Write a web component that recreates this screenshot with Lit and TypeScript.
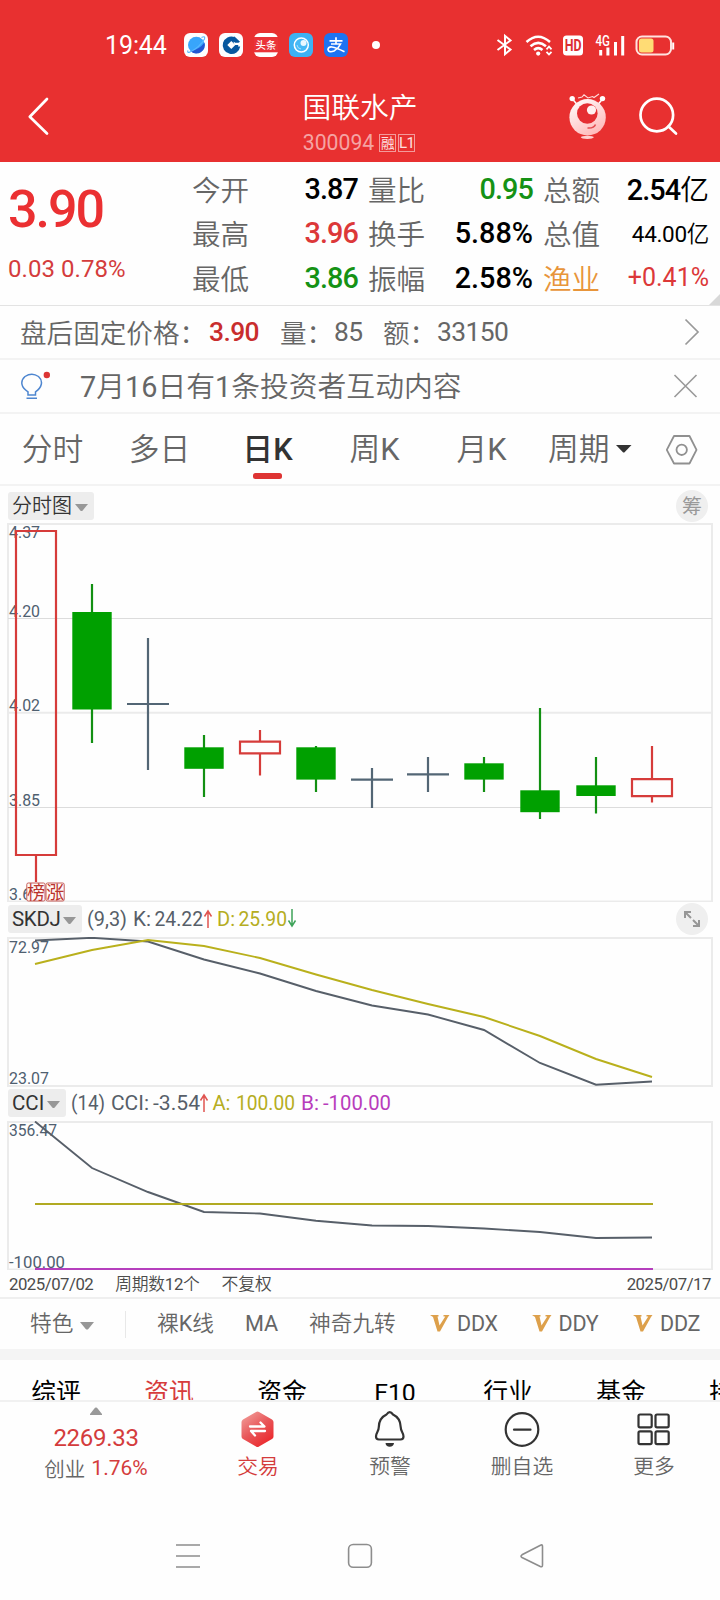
import { LitElement, html, svg, css } from "lit";
import { customElement } from "lit/decorators.js";
import { classMap } from "lit/directives/class-map.js";

type Candle = { kind: "up" | "down" | "flat"; open: number; close: number; high: number; low: number };

const STEP = 56;
const FIRST = 36;
const colX = (i: number) => FIRST + STEP * i;

// Vertical values are offsets inside the 380px price pane.
const CANDLES: Candle[] = [
  { kind: "up", open: 9, close: 333, high: 9, low: 360 },
  { kind: "down", open: 90, close: 187.5, high: 62, low: 221 },
  { kind: "flat", open: 182, close: 182, high: 116, low: 248 },
  { kind: "down", open: 225.3, close: 246.8, high: 213, low: 275 },
  { kind: "up", open: 219.7, close: 231.3, high: 208, low: 253.5 },
  { kind: "down", open: 225.3, close: 257.6, high: 224, low: 270 },
  { kind: "flat", open: 257.6, close: 257.6, high: 246, low: 286 },
  { kind: "flat", open: 252.3, close: 252.3, high: 235, low: 270 },
  { kind: "down", open: 241.3, close: 257.6, high: 235, low: 270 },
  { kind: "down", open: 268.3, close: 290.2, high: 186, low: 297 },
  { kind: "down", open: 263.3, close: 274, high: 235, low: 291.5 },
  { kind: "up", open: 257.2, close: 274.2, high: 224, low: 280.5 },
];

const SKDJ_K = [4.5, 1.8, 5.5, 23.5, 37.5, 55, 69.5, 78.5, 94, 127, 148.7, 145.5];
const SKDJ_D = [28, 14, 4, 10, 22, 38.5, 54, 68, 81, 100, 123, 141];
const CCI = [0.5, 47, 71, 91, 92.5, 99.7, 104.5, 105, 107.5, 111, 117, 116.5];

const toPoints = (ys: number[]) => ys.map((y, i) => `${i ? colX(i) : 35},${y}`).join(" ");

const chev = svg`<path d="M0 0H13L7.7 6.4Q6.5 7.6 5.3 6.4Z" fill="#979797"/>`;

// Latin runs are wrapped so that they can take a heavier weight than the Chinese around them.
const mixed = (s: string) =>
  s.split(/([A-Z0-9]+)/).filter(Boolean).map((p) => (/^[A-Z0-9]/.test(p) ? html`<span class="lat">${p}</span>` : p));

@customElement("status-bar")
class StatusBar extends LitElement {
  static styles = css`
    :host { display: block; }
    .bar { height: 81px; padding-top: 9px; box-sizing: border-box; display: flex; align-items: center; color: #fff; }
    .time { width: 79px; padding-left: 105px; font: 400 25px/1 Roboto, "Noto Sans", sans-serif; letter-spacing: -0.1px; }
    .apps { display: flex; gap: 11px; }
    .dot { width: 8px; height: 8px; border-radius: 4px; background: #fff; margin-left: 24px; }
    .sys { display: block; margin-left: 115px; }
    text { font-family: "Noto Sans CJK SC", sans-serif; }
    .hd { font-family: Roboto, sans-serif; font-weight: 700; }
    .g { font-family: Roboto, sans-serif; font-weight: 500; }
  `;
  render() {
    return html`<div class="bar">
      <div class="time">19:44</div>
      <div class="apps">
        <svg width="24" height="24" viewBox="0 0 24 24">
          <rect width="24" height="24" rx="6" fill="#fdfdff"/>
          <circle cx="12.300" cy="12" r="8.300" fill="#38a5fb"/>
          <path d="M20.500 9.500A8.400 8.400 0 0 1 6.500 18Q15.500 16.500 20.500 9.500Z" fill="#2257d3"/>
          <path d="M17.500 4.500Q21.500 2.500 20.500 6Q16 14 6 19Q3 20.500 4 17.500" fill="none" stroke="#59b8ff" stroke-width="1.200"/>
        </svg>
        <svg width="24" height="24" viewBox="0 0 24 24">
          <rect width="24" height="24" rx="6" fill="#fdfdff"/>
          <path d="M15.500 4A8.800 8.800 0 1 0 21.200 13.500H17.500A5.500 5.500 0 0 1 12.300 17.300 5.300 5.300 0 0 1 7 12 5.300 5.300 0 0 1 12.300 6.700Q14.500 6.800 16 8.200Z" fill="#07579f"/>
          <circle cx="12.300" cy="12" r="7" fill="#07579f"/>
          <path d="M12.300 8 16.300 12 12.300 16 8.300 12Z" fill="#fff"/>
          <path d="M15.500 12H22V9.500L20.500 8.800H14.500Z" fill="#fff"/>
          <path d="M15.500 3.500 21 8.800 19.500 9.800H16L12.500 5.500" fill="#07579f"/>
        </svg>
        <svg width="24" height="24" viewBox="0 0 24 24">
          <rect width="24" height="24" rx="6" fill="#fff"/>
          <rect y="4" width="24" height="15.300" fill="#ea3338"/>
          <text x="12" y="15.700" font-size="10.400" font-weight="500" text-anchor="middle" fill="#fff">头条</text>
        </svg>
        <svg width="24" height="24" viewBox="0 0 24 24">
          <rect width="24" height="24" rx="6" fill="#3db2f3"/>
          <circle cx="12.300" cy="12" r="7" fill="#45b9f6" stroke="#fff" stroke-width="1.500"/>
          <path d="M8 12A4.500 4.500 0 0 0 12 16" stroke="#a7e2ff" stroke-width="1" fill="none"/>
          <circle cx="14.500" cy="10" r="3" fill="#e9f8ff"/>
        </svg>
        <svg width="24" height="24" viewBox="0 0 24 24">
          <rect width="24" height="24" rx="6" fill="#1d73f2"/>
          <path d="M5.500 7.800H18.500M12 4.200V11M7 11H16.500Q14.500 15.500 10 18Q5 20 4 16.800Q4 13.500 8 14Q12 14.500 20.500 18.800" fill="none" stroke="#fff" stroke-width="1.700"/>
        </svg>
      </div>
      <div class="dot"></div>
      <svg class="sys" width="180" height="24" viewBox="0 0 180 24" fill="none" stroke="#fff">
        <path d="M2.500 7 15.500 16.500 10 21.200V2.800L15.500 7.500 2.500 17" stroke-width="2"/>
        <path d="M31.500 9Q43 -1.500 55 9M35.500 13.200Q43.200 6.500 51 13.200M39 17Q43.200 13.200 47.500 17" stroke-width="2.500"/>
        <circle cx="43.200" cy="20.600" r="2.100" fill="#fff" stroke="none"/>
        <path d="M51.500 16.300 54 13.500 56.500 16.300M51.500 18.800 54 21.500 56.500 18.800" stroke-width="1.800"/>
        <rect x="68" y="2.500" width="20" height="20" rx="3.500" fill="#fff" stroke="none"/>
        <text class="hd" x="69.700" y="18.300" font-size="16" textLength="16.800" lengthAdjust="spacingAndGlyphs" fill="#dc2d32" stroke="none">HD</text>
        <text class="g" x="100.500" y="12.800" font-size="14" textLength="14.500" lengthAdjust="spacingAndGlyphs" fill="#fff" stroke="none">4G</text>
        <path d="M105.700 17V22.500M112.900 14.500V22.500M120.500 9V22.500M127.700 3V22.500" stroke-width="3"/>
        <rect x="141.500" y="3.500" width="34.500" height="18" rx="5.500" stroke="#ffe3e0" stroke-width="2"/>
        <rect x="144" y="5.600" width="14.500" height="14" rx="2.500" fill="#ffdc75" stroke="none"/>
        <path d="M178.200 9.500V16.500" stroke-width="2"/>
      </svg>
    </div>`;
  }
}

@customElement("stock-header")
class StockHeader extends LitElement {
  static styles = css`
    :host { display: block; }
    .row { height: 81px; display: grid; grid-template-columns: 240px 240px 240px; color: #fff; }
    .back { display: block; margin: 15px 0 0 27px; }
    .mid { display: flex; flex-direction: column; align-items: center; }
    .name { font: 350 28.800px/36px "Noto Sans CJK SC", sans-serif; margin-top: 7px; height: 43px; }
    .code { display: flex; align-items: center; height: 24px; font: 400 21.200px/24px Roboto, sans-serif; color: #f5a3a3; margin-left: -2px; }
    .tags { display: flex; gap: 2px; margin-left: 5px; }
    .tag { box-sizing: border-box; width: 17px; height: 18px; border: 1px solid #f39b9b; text-align: center; color: #fde0e0; font: 400 13.500px/15px "Noto Sans CJK SC", sans-serif; display: flex; justify-content: center; }
    .latin { font: 400 15px/16px Roboto, sans-serif; letter-spacing: -0.500px; }
    .right { display: flex; }
    .bot { display: block; margin: 12px 0 0 87px; }
    .find { display: block; margin: 14px 0 0 29px; }
  `;
  render() {
    return html`<div class="row">
      <svg class="back" width="24" height="41" fill="none" stroke="#fff" stroke-width="2.700" stroke-linecap="round" stroke-linejoin="round"><path d="M20 3 2.800 20.700 20 37.500"/></svg>
      <div class="mid">
        <div class="name">国联水产</div>
        <div class="code">300094<span class="tags"><span class="tag">融</span><span class="tag latin">L1</span></span></div>
      </div>
      <div class="right">
        <svg class="bot" width="42" height="48" viewBox="0 0 42 48">
          <defs><linearGradient id="body" x1="0" y1="0" x2=".6" y2="1"><stop offset="0" stop-color="#fff"/><stop offset="1" stop-color="#ffbcbc"/></linearGradient></defs>
          <path d="M5.500 6 10 11.500M35.500 6 31 11.500" stroke="#fff" stroke-width="1.500"/>
          <circle cx="5.200" cy="5.600" r="2.700" fill="#fff"/><circle cx="35.500" cy="5.600" r="2.700" fill="#fff"/>
          <path d="M11 5 15 4 17 1.800 21 5 25.500 3.500 27 4.500 32 1" fill="none" stroke="#ffdcdc" stroke-width="1.100"/>
          <circle cx="20.600" cy="24.300" r="18.200" fill="url(#body)"/>
          <circle cx="20.300" cy="20.500" r="10.300" fill="#e52d32"/>
          <circle cx="24.500" cy="17" r="4.600" fill="#fff0f0"/>
          <path d="M20.500 35Q27 35.500 28.500 31.500" stroke="#e34b50" stroke-width="1.500" fill="none"/>
          <ellipse cx="20.300" cy="44.300" rx="6.500" ry="1.600" fill="#ffd0d0"/>
        </svg>
        <svg class="find" width="42" height="42" fill="none" stroke="#fff" stroke-width="2.700" stroke-linecap="round"><circle cx="18.800" cy="20" r="16.300"/><path d="M30.500 31.500 38 38.500"/></svg>
      </div>
    </div>`;
  }
}

@customElement("quote-panel")
class QuotePanel extends LitElement {
  static styles = css`
    :host { display: block; }
    .panel { height: 143px; display: grid; grid-template-columns: 192px 166px 10px 165px 10px 166px 11px; border-bottom: 1px solid #e3e3e3; font-family: Roboto, "Noto Sans CJK SC", sans-serif; }
    .price { padding-left: 8px; color: #eb3032; }
    .last { height: 64px; padding-top: 16px; font: 500 52px/64px Roboto, sans-serif; letter-spacing: -2px; }
    .delta { padding-top: 13px; font: 400 24px/28px Roboto, sans-serif; letter-spacing: 0.050px; color: #d43c3c; }
    .col { padding-top: 5px; }
    .cell { display: flex; justify-content: space-between; align-items: center; height: 44.300px; }
    .label { font: 350 28.600px/40px "Noto Sans CJK SC", sans-serif; color: #666; }
    .value { font-size: 28.800px; line-height: 40px; font-weight: 500; letter-spacing: 0; color: #000; }
    .cn { font-weight: 350; font-family: "Noto Sans CJK SC", sans-serif; }
    .mid { font-size: 22.500px; font-weight: 400; letter-spacing: -0.300px; }
    .pct { font-size: 25px; font-weight: 400; letter-spacing: 0; }
    .red { color: #dc3839; } .green { color: #159215; } .orange { color: #e8953a; }
    .corner { align-self: end; width: 0; border-left: 11px solid transparent; border-bottom: 11px solid #d8d8d8; }
    .tight { letter-spacing: -0.900px; }
    .tight .cn { letter-spacing: 0; }
  `;
  cell(label: string, value: unknown, cls = "", lcls = "") {
    return html`<div class="cell"><span class="label ${lcls}">${label}</span><span class="value ${cls}">${value}</span></div>`;
  }
  render() {
    return html`<div class="panel">
      <div class="price"><div class="last">3.90</div><div class="delta">0.03 0.78%</div></div>
      <div class="col">${this.cell("今开", "3.87", "tight")}${this.cell("最高", "3.96", "red tight")}${this.cell("最低", "3.86", "green tight")}</div>
      <i></i>
      <div class="col">${this.cell("量比", "0.95", "green tight")}${this.cell("换手", "5.88%")}${this.cell("振幅", "2.58%")}</div>
      <i></i>
      <div class="col">${this.cell("总额", html`2.54<span class="cn">亿</span>`, "tight")}${this.cell("总值", html`44.00<span class="cn">亿</span>`, "mid")}${this.cell("渔业", "+0.41%", "pct red", "orange")}</div>
      <div class="corner"></div>
    </div>`;
  }
}

@customElement("notice-rows")
class NoticeRows extends LitElement {
  static styles = css`
    :host { display: block; }
    .row { display: flex; align-items: center; box-sizing: border-box; border-bottom: 2px solid #f3f3f3; color: #666; font-family: Roboto, "Noto Sans CJK SC", sans-serif; }
    .fixed { height: 54px; padding-left: 20px; font-size: 26.400px; }
    .tip { height: 54px; padding-left: 20px; }
    .cn { font: 350 26.600px/40px "Noto Sans CJK SC", sans-serif; }
    .num { line-height: 40px; letter-spacing: -0.600px; }
    .price { color: #c92d2d; font-weight: 500; }
    .a { width: 189px; } .b { width: 71px; } .c { width: 54px; } .d { width: 49px; } .e { width: 54px; }
    .more { margin-left: auto; margin-right: 19px; }
    .text { font: 350 28.800px/40px Roboto, "Noto Sans CJK SC", sans-serif; width: 593px; padding-left: 28px; padding-top: 2px; }
    .lat { font-weight: 400; }
  `;
  render() {
    return html`<div class="row fixed">
        <span class="cn a">盘后固定价格：</span><span class="num b price">3.90</span>
        <span class="cn c">量：</span><span class="num d">85</span>
        <span class="cn e">额：</span><span class="num">33150</span>
        <svg class="more" width="18" height="30" fill="none" stroke="#999" stroke-width="1.700"><path d="M2.500 2.500 15 15 2.500 27.500"/></svg>
      </div>
      <div class="row tip">
        <svg width="32" height="30" fill="none" stroke="#4e86d0" stroke-width="1.500"><path d="M8 24V20.800C.8 16.500 0 10 5 5.500Q12 .8 18.500 5.500C23.500 10 22 16.500 15.500 20.800V24ZM6.500 27.300H17"/><circle cx="26.800" cy="4" r="3.200" fill="#dc3535" stroke="none"/></svg>
        <span class="text">${mixed("7月16日有1条投资者互动内容")}</span>
        <svg width="26" height="26" fill="none" stroke="#999" stroke-width="1.600"><path d="M1.500 2 23.500 24M23.500 2 1.500 24"/></svg>
      </div>`;
  }
}

@customElement("period-tabs")
class PeriodTabs extends LitElement {
  static styles = css`
    :host { display: block; }
    .tabs { height: 72px; box-sizing: border-box; border-bottom: 2px solid #f3f3f3; display: grid; grid-template-columns: 105px 109px 107px 107px 107px 125px 60px; }
    .tab { display: flex; flex-direction: column; align-items: center; color: #666; font: 350 30.800px/40px Roboto, "Noto Sans CJK SC", sans-serif; padding-top: 16px; }
    .on { color: #333; font-weight: 500; }
    .lat { font-weight: 400; }
    .on .lat { font-weight: 500; }
    .bar { width: 29px; height: 6px; border-radius: 2.500px; background: #de3433; margin-top: 3px; }
    .cycle { flex-direction: row; align-items: flex-start; padding-left: 13px; }
    .caret { margin: 15px 0 0 6px; }
    .gear { margin: 20px 0 0 5px; }
  `;
  render() {
    const tab = (t: string, on = false) => html`<div class=${classMap({ tab: true, on })}><div>${mixed(t)}</div>${on ? html`<div class="bar"></div>` : ""}</div>`;
    return html`<div class="tabs">
      ${tab("分时")}${tab("多日")}${tab("日K", true)}${tab("周K")}${tab("月K")}
      <div class="tab cycle">周期<svg class="caret" width="16" height="9"><path d="M0 0H15.500L8.800 7Q7.700 8 6.700 7Z" fill="#333"/></svg></div>
      <svg class="gear" width="34" height="32" fill="none" stroke="#909090" stroke-width="1.800"><path d="M9 2H24.500L31.500 15.800 24.500 29.500H9L1.800 15.800Z" stroke-linejoin="round"/><circle cx="16.700" cy="15.800" r="5.200"/></svg>
    </div>`;
  }
}

@customElement("chart-area")
class ChartArea extends LitElement {
  static styles = css`
    :host { display: block; }
    .head { display: flex; align-items: center; padding: 0 12px 0 8px; box-sizing: border-box; }
    .h1 { height: 36px; padding-top: 4px; }
    .h2 { height: 35px; padding-bottom: 1px; }
    .h3 { height: 34px; padding-bottom: 2px; }
    .chip { display: flex; align-items: center; gap: 3px; height: 28px; padding: 0 6px 0 4px; background: #ededed; border-radius: 3px; color: #333; font: 350 20px/26px Roboto, "Noto Sans CJK SC", sans-serif; box-sizing: border-box; }
    .w1 { width: 86px; } .w2 { width: 74px; font-weight: 400; font-size: 20.500px; letter-spacing: -0.300px; gap: 2px; } .w3 { width: 58px; font-weight: 400; font-size: 20.500px; }
    .chip svg { margin-top: 4px; flex: none; }
    .grow { flex: 1; }
    .round { width: 32px; height: 32px; border-radius: 16px; background: #efefef; display: flex; align-items: center; justify-content: center; color: #999; font: 400 20px/30px "Noto Sans CJK SC", sans-serif; flex: none; }
    .legend { display: block; margin-left: 5px; }
    .pane { display: block; }
    .l { font: 400 20.500px Roboto, sans-serif; fill: #575f69; }
    .y { fill: #b5ad22; } .m { fill: #b83cbc; }
    .ax { font: 400 16.500px Roboto, sans-serif; fill: #4f6070; }
    .frame { fill: none; stroke: #ebebeb; stroke-width: 2; }
    .grid { stroke: #dcdcdc; stroke-width: 1; }
    .badge { font: 400 18px "Noto Sans CJK SC", sans-serif; fill: #b9332c; }
    .dates { height: 29px; box-sizing: border-box; padding: 0 9px; display: flex; align-items: center; border-bottom: 2px solid #efefef; color: #4c4c4c; font: 400 16.800px/24px Roboto, "Noto Sans CJK SC", sans-serif; letter-spacing: -0.500px; }
    .cnt { margin-left: 22px; letter-spacing: -0.300px; } .adj { margin-left: 22px; flex: 1; letter-spacing: 0; }
    .dates .cn { font-weight: 350; }
    .lat { font-weight: 400; }
  `;
  t(x: number, w: number, s: string, y: number, cls: string) {
    return svg`<text class=${cls} x=${x} y=${y} textLength=${w} lengthAdjust="spacingAndGlyphs">${s}</text>`;
  }
  candle(c: Candle, i: number) {
    const x = colX(i);
    if (c.kind === "flat")
      return svg`<path d="M${x} ${c.high}V${c.low}M${x - 21} ${c.open}H${x + 21}" stroke="#536675" stroke-width="2.200" fill="none"/>`;
    if (c.kind === "down")
      return svg`<path d="M${x} ${c.high}V${c.low}" stroke="#129012" stroke-width="2.200"/><rect x=${x - 19.7} y=${c.open} width="39.400" height=${c.close - c.open} fill="#00a000"/>`;
    return svg`<path d="M${x} ${c.high}V${c.open}M${x} ${c.close}V${c.low}M${x - 20} ${c.open}H${x + 20}V${c.close}H${x - 20}Z" stroke="#d63c3a" stroke-width="2.200" fill="none"/>`;
  }
  arrow(x: number, up: boolean) {
    return svg`<path d=${up ? `M${x} 24V7M${x - 3.5} 12.5 ${x} 7 ${x + 3.5} 12.5` : `M${x} 5V22M${x - 3.5} 16.5 ${x} 22 ${x + 3.5} 16.5`} fill="none" stroke=${up ? "#e05450" : "#3fa35a"} stroke-width="1.500"/>`;
  }
  render() {
    const caret = html`<svg width="13" height="8">${chev}</svg>`;
    const a = this.t.bind(this);
    return html`
      <div class="head h1"><div class="chip w1">分时图${caret}</div><div class="grow"></div><div class="round">筹</div></div>
      <svg class="pane" width="720" height="380" viewBox="0 0 720 380">
        <path class="frame" d="M8 2H712V379.500H8ZM8 190.700H712"/>
        <path class="grid" d="M8 96.500H712M8 285.500H712"/>
        ${a(9, 31, "4.37", 16, "ax")}${a(9, 31, "4.20", 95, "ax")}${a(9, 31, "4.02", 189, "ax")}${a(9, 31, "3.85", 283.5, "ax")}${a(9, 31, "3.67", 378, "ax")}
        ${CANDLES.map((c, i) => this.candle(c, i))}
        <rect x="26.800" y="361" width="18.200" height="18" rx="1.500" fill="#fff8f7" stroke="#c65d58" stroke-width="1"/>
        <rect x="46" y="361" width="18.200" height="18" rx="1.500" fill="#fff8f7" stroke="#c65d58" stroke-width="1"/>
        <text class="badge" x="27" y="376.500">榜</text><text class="badge" x="46.200" y="376.500">涨</text>
      </svg>
      <div class="head h2"><div class="chip w2">SKDJ${caret}</div>
        <svg class="legend" width="400" height="30">
          ${a(0, 40, "(9,3)", 22, "l")}${a(46, 18, "K:", 22, "l")}${a(67.5, 48.5, "24.22", 22, "l")}${this.arrow(121, true)}
          ${a(130, 18, "D:", 22, "l y")}${a(151.5, 48.5, "25.90", 22, "l y")}${this.arrow(205, false)}
        </svg>
        <div class="grow"></div>
        <div class="round"><svg width="18" height="18" fill="none" stroke="#979797" stroke-width="2"><path d="M2 8V2H8M2 2 8 8M10 10 16 16M16 10V16H10"/></svg></div>
      </div>
      <svg class="pane" width="720" height="150" viewBox="0 1 720 150">
        <path class="frame" d="M8 2H712V150H8Z"/>
        ${a(9, 40, "72.97", 16.5, "ax")}${a(9, 40, "23.07", 147.5, "ax")}
        <polyline points=${toPoints(SKDJ_K)} fill="none" stroke="#575f69" stroke-width="1.900"/>
        <polyline points=${toPoints(SKDJ_D)} fill="none" stroke="#b9b01c" stroke-width="1.900"/>
      </svg>
      <div class="head h3"><div class="chip w3">CCI${caret}</div>
        <svg class="legend" width="400" height="30">
          ${a(0, 34, "(14)", 22, "l")}${a(40, 38, "CCI:", 22, "l")}${a(82, 47, "-3.54", 22, "l")}${this.arrow(133, true)}
          ${a(141.5, 18, "A:", 22, "l y")}${a(165, 59, "100.00", 22, "l y")}
          ${a(230, 18, "B:", 22, "l m")}${a(252, 68, "-100.00", 22, "l m")}
        </svg>
      </div>
      <svg class="pane" width="720" height="149" viewBox="0 0 720 149">
        <path class="frame" d="M8 1H712V148.500H8Z"/>
        ${a(9, 48, "356.47", 15, "ax")}${a(9, 56, "-100.00", 147, "ax")}
        <polyline points=${toPoints(CCI)} fill="none" stroke="#575f69" stroke-width="1.900"/>
        <path d="M35 83H653" stroke="#b1aa22" stroke-width="2"/><path d="M35 148H653" stroke="#b53fbd" stroke-width="2"/>
      </svg>
      <div class="dates"><span>2025/07/02</span><span class="cnt cn">${mixed("周期数12个")}</span><span class="adj cn">不复权</span><span>2025/07/17</span></div>`;
  }
}

@customElement("tool-rows")
class ToolRows extends LitElement {
  static styles = css`
    :host { display: block; }
    .tools { height: 50px; border-bottom: 11px solid #f4f4f4; display: flex; align-items: center; color: #666; font: 350 21.700px/30px Roboto, "Noto Sans CJK SC", sans-serif; white-space: nowrap; overflow: hidden; }
    .tools > span { flex: none; }
    .lat { font-weight: 400; }
    .feat { width: 95px; padding-left: 30px; display: flex; align-items: center; gap: 7px; }
    .feat svg { margin-top: 5px; }
    .sep { width: 1px; height: 27px; background: #e8e8e8; margin-right: 31px; }
    .k { width: 88px; } .ma { width: 64px; } .nine { width: 121px; }
    .dd { width: 101.500px; display: flex; align-items: center; gap: 7px; }
    .dd .lat { font-size: 21.500px; letter-spacing: -0.200px; }
    .news { height: 42px; overflow: hidden; border-bottom: 2px solid #f1f1f1; display: grid; grid-template-columns: repeat(7, 113px); padding-left: 31px; color: #000; font: 400 24.800px/30px Roboto, "Noto Sans CJK SC", sans-serif; box-sizing: border-box; }
    .item { padding-top: 18px; width: 50px; text-align: center; white-space: nowrap; }
    .cur { color: #d63c3c; }
  `;
  render() {
    const dd = (s: string) => html`<span class="dd"><svg width="20" height="18"><path d="M0 0H8.500V1.500H7.500L9.500 10.500 15.300 1.500H13.500V0H19.500L18 2 10 16.500H7.500L3 2Z" fill="#dda04b"/></svg><span class="lat">${s}</span></span>`;
    return html`<div class="tools">
        <span class="feat">特色<svg width="14" height="9"><g transform="scale(1.080)">${chev}</g></svg></span><span class="sep"></span>
        <span class="k">${mixed("裸K线")}</span><span class="ma lat">MA</span><span class="nine">神奇九转</span>${["DDX", "DDY", "DDZ"].map(dd)}
      </div>
      <div class="news">${["综评", "资讯", "资金", "F10", "行业", "基金", "持仓"].map((s, i) => html`<span class="item ${i === 1 ? "cur" : ""}">${s}</span>`)}</div>`;
  }
}

@customElement("bottom-bar")
class BottomBar extends LitElement {
  static styles = css`
    :host { display: block; }
    .bar { height: 100px; display: grid; grid-template-columns: 192px repeat(4, 132px); }
    .index { display: flex; flex-direction: column; align-items: center; color: #d43c3c; }
    .up { margin-top: 5px; }
    .pts { font: 400 24px/26px Roboto, sans-serif; margin-top: 10px; letter-spacing: -0.300px; }
    .chg { display: flex; align-items: center; gap: 6px; margin-top: 1px; font: 400 21px/32px Roboto, sans-serif; }
    .cn { color: #666; font: 350 20.500px/32px "Noto Sans CJK SC", sans-serif; }
    .act { display: flex; flex-direction: column; align-items: center; color: #666; font: 350 20.800px/30px "Noto Sans CJK SC", sans-serif; padding-top: 8px; gap: 2px; }
    .red { color: #d43c3c; }
    .nav { height: 98px; display: flex; padding: 40px 0 0 175px; gap: 146px; box-sizing: border-box; }
  `;
  render() {
    const ic = { w: 38, h: 38 };
    return html`<div class="bar">
        <div class="index"><svg class="up" width="12" height="8"><path d="M0 8V7L5 .8Q6 0 7 .8L12 7V8Z" fill="#999"/></svg>
          <div class="pts">2269.33</div><div class="chg"><span class="cn">创业</span>1.76%</div></div>
        <div class="act red"><svg width=${ic.w} height=${ic.h}>
          <defs><linearGradient id="hex" x1=".1" y1="0" x2=".8" y2="1"><stop offset="0" stop-color="#f2a19c"/><stop offset=".5" stop-color="#e8575a"/><stop offset="1" stop-color="#ec2428"/></linearGradient></defs>
          <path d="M17 2Q18.500 1 20 2L33 9.500Q34.500 10.500 34.500 12V26.500Q34.500 28 33 29L20 36.500Q18.500 37.500 17 36.500L4 29Q2.500 28 2.500 26.500V12Q2.500 10.500 4 9.500Z" fill="url(#hex)"/>
          <path d="M11 16.500H25.500L21.500 12.500M26 21H12L16 25.500" fill="none" stroke="#fff" stroke-width="2.300" stroke-linecap="round" stroke-linejoin="round"/></svg>交易</div>
        <div class="act"><svg width=${ic.w} height=${ic.h} fill="none" stroke="#333" stroke-width="2.200" stroke-linejoin="round">
          <path d="M15.500 4.500Q18.700-.2 22 4.500Q29.500 8 29.700 17C29.800 22 32.500 22.500 32.500 26.500Q32.500 29.500 29.500 29.500H8Q5 29.500 5 26.500C5 22.500 7.700 22 7.800 17Q8 8 15.500 4.500Z"/><path d="M14.500 33H23Q22.500 36.800 18.700 36.800T14.500 33Z" fill="#333" stroke="none"/></svg>预警</div>
        <div class="act"><svg width=${ic.w} height=${ic.h} fill="none" stroke="#333" stroke-width="2.200" stroke-linecap="round"><circle cx="19" cy="19.500" r="16.300"/><path d="M11 19.700H27.500"/></svg>删自选</div>
        <div class="act"><svg width=${ic.w} height=${ic.h} fill="none" stroke="#333" stroke-width="2.200">
          <rect x="3.500" y="4.500" width="13.200" height="12.800" rx="1.500"/><rect x="20.500" y="4.500" width="13.200" height="12.800" rx="1.500"/><rect x="3.500" y="21.300" width="13.200" height="12.800" rx="1.500"/><rect x="20.500" y="21.300" width="13.200" height="12.800" rx="1.500"/></svg>更多</div>
      </div>
      <div class="nav">
        <svg width="26" height="28" fill="none" stroke="#8d8d8d" stroke-width="1.700"><path d="M1 3H25M1 14H25M1 25H25"/></svg>
        <svg width="26" height="28" fill="none" stroke="#8d8d8d" stroke-width="1.600"><rect x="1.600" y="2.500" width="22.800" height="22.800" rx="4.500"/></svg>
        <svg width="26" height="28" fill="none" stroke="#8d8d8d" stroke-width="1.600"><path d="M21.500 3.200Q23.500 2.200 23.500 4.500V23Q23.500 25.500 21.300 24.500L3 15.500Q1 14.200 3 12.800Z"/></svg>
      </div>`;
  }
}

@customElement("app-root")
class AppRoot extends LitElement {
  static styles = css`
    :host { display: block; width: 720px; height: 1600px; overflow: hidden; background: #fefefe; }
    .top { background: #e83030; height: 162px; }
  `;
  render() {
    return html`<div class="top"><status-bar></status-bar><stock-header></stock-header></div>
      <quote-panel></quote-panel><notice-rows></notice-rows><period-tabs></period-tabs>
      <chart-area></chart-area><tool-rows></tool-rows><bottom-bar></bottom-bar>`;
  }
}
